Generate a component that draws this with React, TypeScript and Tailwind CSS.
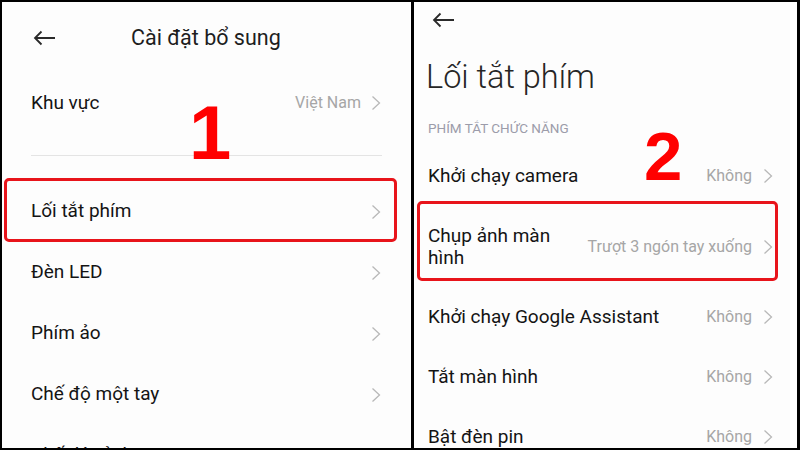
const font = { fontFamily: 'Roboto, "Noto Sans", sans-serif' };

const Chevron = () => (
  <svg width="10" height="16" viewBox="0 0 10 16" fill="none">
    <polyline points="1.5,1.5 8.5,8 1.5,14.5" stroke="#b8b8b8" strokeWidth="1.3" />
  </svg>
);

const BackArrow = () => (
  <svg width="23" height="16" viewBox="0 0 23 16" fill="none">
    <path d="M22 8H2M8.5 1.5L2 8l6.5 6.5" stroke="#2a2a2a" strokeWidth="1.8" />
  </svg>
);

const leftRows = ['Đèn LED', 'Phím ảo', 'Chế độ một tay', 'Chế độ rảnh tay'];

const rightRows = [
  { label: 'Khởi chạy Google Assistant', value: 'Không' },
  { label: 'Tắt màn hình', value: 'Không' },
  { label: 'Bật đèn pin', value: 'Không' },
];

const App = () => {
  return (
    <div
      className="w-[800px] h-[450px] bg-black flex gap-[3px] pt-[2px] pb-[2px] pl-[2px] pr-[3px] overflow-hidden"
      style={font}
    >
      {/* left panel */}
      <div className="relative w-[409px] h-full bg-[#fdfdfd] overflow-hidden flex flex-col text-[#141414]">
        <div className="h-[72px] flex items-center shrink-0">
          <div className="ml-[31px]">
            <BackArrow />
          </div>
          <div className="ml-[75px] text-[21.5px] text-[#1e1e1e]">Cài đặt bổ sung</div>
        </div>

        <div className="h-[58px] flex items-center justify-between pl-[29px] pr-[30px] shrink-0">
          <span className="text-[19px]">Khu vực</span>
          <div className="flex items-center gap-[10px]">
            <span className="text-[16px] text-[#a6a6a6]">Việt Nam</span>
            <Chevron />
          </div>
        </div>
        <div className="mt-[23px] mx-[29px] h-px bg-[#e4e4e4] shrink-0" />

        <div className="mt-[22px] ml-[2px] w-[393px] h-[64px] border-[3px] border-[#e8141b] rounded-[5px] flex items-center justify-between pl-[24px] pr-[13px] pt-[3px] shrink-0">
          <span className="text-[19px]">Lối tắt phím</span>
          <Chevron />
        </div>

        {leftRows.map((r) => (
          <div key={r} className="h-[61px] flex items-center justify-between pl-[29px] pr-[30px] shrink-0">
            <span className="text-[19px]">{r}</span>
            <Chevron />
          </div>
        ))}

        <div
          className="absolute left-[187px] top-[93px] text-[76px] leading-none font-bold text-[#ff0000]"
          style={{ fontFamily: '"Liberation Sans", Arial, sans-serif' }}
        >
          1
        </div>
      </div>

      {/* right panel */}
      <div className="relative flex-1 h-full bg-[#fdfdfd] overflow-hidden flex flex-col text-[#141414]">
        <div className="h-[36px] flex items-center pl-[18px] shrink-0">
          <BackArrow />
        </div>
        <div className="h-[78px] flex items-center pl-[12px] shrink-0">
          <span className="text-[32.5px] font-light text-[#262626]">Lối tắt phím</span>
        </div>
        <div className="h-[24px] flex items-center pl-[14px] shrink-0">
          <span className="text-[13.5px] text-[#9c9caa]">PHÍM TẮT CHỨC NĂNG</span>
        </div>

        <div className="mt-[11px] h-[50px] flex items-center justify-between pl-[14px] pr-[24px] shrink-0">
          <span className="text-[19px]">Khởi chạy camera</span>
          <div className="flex items-center gap-[11px]">
            <span className="text-[16px] text-[#a6a6a6]">Không</span>
            <Chevron />
          </div>
        </div>

        <div className="ml-[3px] w-[361px] h-[80px] border-[3px] border-[#e8141b] rounded-[5px] flex items-center justify-between pl-[8px] pr-[2px] pt-[11px] shrink-0">
          <span className="text-[19px] leading-[22px]">
            Chụp ảnh màn
            <br />
            hình
          </span>
          <div className="flex items-center gap-[11px]">
            <span className="text-[16px] text-[#a6a6a6]">Trượt 3 ngón tay xuống</span>
            <Chevron />
          </div>
        </div>

        <div className="mt-[6px]" />
        {rightRows.map((r) => (
          <div key={r.label} className="h-[60px] flex items-center justify-between pl-[14px] pr-[24px] shrink-0">
            <span className="text-[19px]">{r.label}</span>
            <div className="flex items-center gap-[11px]">
              <span className="text-[16px] text-[#a6a6a6]">{r.value}</span>
              <Chevron />
            </div>
          </div>
        ))}

        <div
          className="absolute left-[230px] top-[120px] text-[69px] leading-none font-bold text-[#ff0000]"
          style={{ fontFamily: '"Liberation Sans", Arial, sans-serif' }}
        >
          2
        </div>
      </div>
    </div>
  );
};

export default App;
